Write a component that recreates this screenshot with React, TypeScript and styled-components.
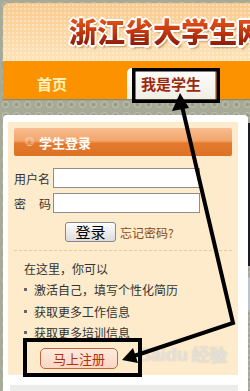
import React from "react";
import styled, {createGlobalStyle} from "styled-components";

const GlobalStyle = createGlobalStyle`
  html, body {
    margin: 0;
    padding: 0;
  }
  body {
    font-family: "Noto Sans CJK SC", "Noto Sans", sans-serif;
  }
`;

const siteName = "浙江省大学生网";
const features = ["激活自己，填写个性化简历", "获取更多工作信息", "获取更多培训信息"];

export default function App() {
    return (
        <Page>
            <GlobalStyle />
            <Header>
                <SiteTitle data-text={siteName}>
                    <TitleText>{siteName}</TitleText>
                </SiteTitle>
            </Header>
            <Nav>
                <NavLink>首页</NavLink>
                <ActiveTab>我是学生</ActiveTab>
            </Nav>
            <Content>
                <Card>
                    <LoginBox>
                        <BoxHeading>
                            <HeadingMark>◎</HeadingMark>
                            学生登录
                        </BoxHeading>
                        <FormRow>
                            <FieldLabel>用户名</FieldLabel>
                            <TextInput type="text" />
                        </FormRow>
                        <FormRow $gap={5}>
                            <FieldLabel><span>密</span><span>码</span></FieldLabel>
                            <TextInput type="password" />
                        </FormRow>
                        <ButtonRow>
                            <LoginButton>登录</LoginButton>
                            <ForgotLink>忘记密码?</ForgotLink>
                        </ButtonRow>
                        <Divider />
                        <Intro>在这里，你可以</Intro>
                        <FeatureList>
                            {features.map(f => (
                                <FeatureItem key={f}>{f}</FeatureItem>
                            ))}
                        </FeatureList>
                        <RegisterButton>马上注册</RegisterButton>
                    </LoginBox>
                    <NextBox />
                </Card>
                <SideColumn>
                    <DarkBlock />
                    <LightBlock />
                </SideColumn>
            </Content>
            <Watermark>Bai<WatermarkDu>du</WatermarkDu>经验</Watermark>
            <Annotation viewBox="0 0 250 391">
                <rect x="133.75" y="69.75" width="84.5" height="31.5" fill="none" stroke="#000" strokeWidth="3.5" />
                <rect x="25" y="340" width="115" height="35" fill="none" stroke="#000" strokeWidth="4" />
                <polyline points="182,106 233,323 134,356" fill="none" stroke="#000" strokeWidth="4" strokeLinejoin="miter" />
                <polygon points="180,93 172,111 189,108" fill="#000" />
                <polygon points="122,360 133,348 138,363" fill="#000" />
            </Annotation>
        </Page>
    );
}

const Page = styled.div`
  position: relative;
  width: 250px;
  height: 391px;
  overflow: hidden;
  box-sizing: border-box;
  padding-top: 3px;
  background-color: #a7aa97;
  background-image: radial-gradient(circle, transparent 2px, rgba(255, 255, 255, 0.22) 3px, transparent 4px),
    radial-gradient(circle, rgba(80, 85, 70, 0.18) 1px, transparent 2px);
  background-size: 11px 11px, 11px 11px;
`;

const Header = styled.div`
  margin-left: 3px;
  height: 58px;
  border-radius: 6px 0 0 0;
  background-image: radial-gradient(circle, rgba(255, 255, 255, 0.35) 1px, transparent 1.6px),
    linear-gradient(#f9c98c, #fcd9a6 60%, #fde3b8);
  background-size: 4px 4px, 100% 100%;
  display: flex;
  align-items: center;
  padding-left: 66px;
  overflow: hidden;
  white-space: nowrap;
`;

// the outline layer comes from ::before, stacked in the same grid cell as the gradient text
const SiteTitle = styled.div`
  display: inline-grid;
  margin-top: -3px;
  font-family: "Noto Sans CJK SC", sans-serif;
  font-size: 28px;
  font-weight: 900;
  line-height: 1;
  &::before {
    content: attr(data-text);
    grid-area: 1 / 1;
    color: #fff;
    text-shadow: 1px 1px 0 #fff, -1px -1px 0 #fff, 1px -1px 0 #fff, -1px 1px 0 #fff,
      2px 0 0 #fff, -2px 0 0 #fff, 0 2px 0 #fff, 0 -2px 0 #fff, 2px 3px 2px rgba(120, 60, 0, 0.4);
  }
`;

const TitleText = styled.span`
  grid-area: 1 / 1;
  background: linear-gradient(#e8561a, #c43a0e 50%, #8e1c08);
  -webkit-background-clip: text;
  background-clip: text;
  color: transparent;
`;

const Nav = styled.div`
  margin-left: 3px;
  height: 38px;
  background: #fd9200;
  display: flex;
  align-items: flex-end;
  box-shadow: 0 1px 1px rgba(90, 60, 0, 0.3);
`;

const NavLink = styled.div`
  width: 98px;
  height: 31px;
  line-height: 31px;
  text-align: center;
  font-size: 15px;
  font-weight: 700;
  color: #fff2bd;
`;

const ActiveTab = styled.div`
  margin-left: 26px;
  width: 88px;
  height: 31px;
  line-height: 31px;
  text-align: center;
  font-size: 15px;
  font-weight: 700;
  color: #9a2a0c;
  border-radius: 5px 5px 0 0;
  background: linear-gradient(#ffffff, #f1ede6);
`;

const Content = styled.div`
  display: flex;
  margin-top: 16px;
`;

const Card = styled.div`
  margin-left: 3px;
  width: 245px;
  box-sizing: border-box;
  padding: 7px 10px 0 5px;
  background: #fff;
  border-radius: 4px 4px 0 0;
`;

const LoginBox = styled.div`
  height: 253px;
  box-sizing: border-box;
  padding: 6px 6px 0;
  background: #fdebcb;
  display: flex;
  flex-direction: column;
`;

const BoxHeading = styled.div`
  height: 28px;
  display: flex;
  align-items: center;
  padding-left: 11px;
  border-radius: 2px;
  color: #fff;
  font-size: 13px;
  font-weight: 700;
  background: linear-gradient(#f6bd92, #f2a66c 45%, #e2792c 55%, #dd7226);
`;

const HeadingMark = styled.span`
  font-size: 9px;
  font-weight: 400;
  margin-right: 5px;
  align-self: flex-start;
  margin-top: 7px;
`;

const FormRow = styled.div<{ $gap?: number }>`
  display: flex;
  align-items: center;
  margin-top: ${p => p.$gap ?? 12}px;
`;

const FieldLabel = styled.div`
  width: 37px;
  margin-right: 2px;
  display: flex;
  justify-content: space-between;
  font-size: 12px;
  color: #333;
`;

const TextInput = styled.input`
  width: 147px;
  height: 20px;
  box-sizing: border-box;
  border: 1px solid #8e8e8e;
  background: #fff;
  padding: 0 3px;
  margin: 0;
  outline: none;
`;

const ButtonRow = styled.div`
  display: flex;
  align-items: center;
  margin-top: 9px;
  padding-left: 51px;
`;

const LoginButton = styled.button`
  width: 51px;
  height: 20px;
  padding: 0;
  border: 1px solid #888;
  border-radius: 3px;
  background: linear-gradient(#fdfdfd, #dcdcdc);
  font-family: "Noto Sans CJK SC", sans-serif;
  font-size: 15px;
  line-height: 18px;
  color: #000;
`;

const ForgotLink = styled.span`
  margin-left: 4px;
  font-size: 12px;
  color: #8a4a12;
`;

const Divider = styled.div`
  margin-top: 8px;
  border-top: 1px dashed #efc890;
`;

const Intro = styled.div`
  margin-top: 7px;
  padding-left: 10px;
  font-size: 12px;
  line-height: 21px;
  color: #333;
`;

const FeatureList = styled.ul`
  list-style: none;
  margin: 0;
  padding: 0 0 0 10px;
`;

const FeatureItem = styled.li`
  display: flex;
  align-items: center;
  font-size: 12px;
  line-height: 21.5px;
  color: #333;
  &::before {
    content: "";
    width: 3px;
    height: 3px;
    background: #666;
    margin-right: 7px;
  }
`;

const RegisterButton = styled.div`
  margin: 4px 0 0 26px;
  width: 78px;
  height: 21px;
  box-sizing: border-box;
  border: 1px solid #c6643c;
  border-radius: 5px;
  background: linear-gradient(#feeadd, #fbd6c3);
  text-align: center;
  font-size: 13px;
  line-height: 19px;
  color: #b4300c;
`;

const NextBox = styled.div`
  margin: 10px 0 0 2px;
  height: 20px;
  background: #ececea;
`;

const SideColumn = styled.div`
  flex: 1;
  display: flex;
  flex-direction: column;
`;

const DarkBlock = styled.div`
  margin-top: 8px;
  height: 143px;
  background: #1b1b27;
`;

const LightBlock = styled.div`
  margin-top: 12px;
  height: 30px;
  border: 1px solid #b9c4cf;
  background: #f3f6f8;
`;

const Watermark = styled.div`
  position: absolute;
  left: 138px;
  top: 343px;
  font-family: "Liberation Sans", sans-serif;
  font-size: 18px;
  font-weight: 700;
  color: rgba(255, 255, 255, 0.6);
  text-shadow: 0 0 1px rgba(120, 120, 120, 0.5);
  pointer-events: none;
`;

const WatermarkDu = styled.span`
  margin-right: 4px;
`;

const Annotation = styled.svg`
  position: absolute;
  left: 0;
  top: 0;
  width: 250px;
  height: 391px;
  pointer-events: none;
`;
